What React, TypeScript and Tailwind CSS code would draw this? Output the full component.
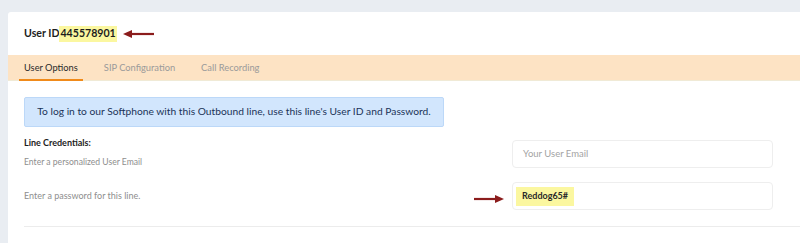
import React from "react";

function ArrowLeft() {
  return (
    <svg width="32" height="8" viewBox="0 0 32 8" className="block">
      <line x1="6" y1="4" x2="31" y2="4" stroke="#8b1c1c" strokeWidth="2.2" />
      <polygon points="0,4 9,0 9,8" fill="#8b1c1c" />
    </svg>
  );
}

function ArrowRight() {
  return (
    <svg width="30" height="8" viewBox="0 0 30 8" className="block">
      <line x1="0" y1="4" x2="24" y2="4" stroke="#8b1c1c" strokeWidth="2.2" />
      <polygon points="30,4 21,0 21,8" fill="#8b1c1c" />
    </svg>
  );
}

export default function App() {
  return (
    <div
      className="w-[800px] h-[243px] bg-[#e9edf2] pt-[12px] pl-[8px] overflow-hidden"
      style={{ fontFamily: "Lato, 'Open Sans', sans-serif" }}
    >
      <div className="bg-white rounded-tl-[3px] h-full">
        <div className="h-[43px] flex items-center pl-[16px] pt-[1px]">
          <span className="text-[10.6px] font-bold text-[#1d1d1d]">User ID</span>
          <span className="text-[10.6px] font-bold text-[#1d1d1d] bg-[#fbf7a0] px-[1px]">445578901</span>
          <span className="ml-[6px]">
            <ArrowLeft />
          </span>
        </div>
        <div className="h-[26px] bg-[#fde3c4] border-b border-[#f0ead6] flex items-stretch pl-[11px] text-[9.3px]">
          <div className="relative px-[5px] flex items-center text-[#2a2a2a]">
            User Options
            <div className="absolute left-0 right-0 bottom-[-1px] h-[2px] bg-[#f08a1a]" />
          </div>
          <div className="ml-[21px] flex items-center text-[#9a9a9a]">SIP Configuration</div>
          <div className="ml-[26px] flex items-center text-[#9a9a9a]">Call Recording</div>
        </div>
        <div className="pl-[16px] pt-[16px]">
          <div className="w-[420px] h-[30px] bg-[#d2e6fd] border border-[#bcd8f8] rounded-[2px] flex items-center justify-center text-[10.25px] text-[#1b3358]">
            To log in to our Softphone with this Outbound line, use this line's User ID and Password.
          </div>
          <div className="flex mt-[13px]">
            <div className="w-[488px] flex flex-col">
              <div className="text-[9px] font-bold text-[#1d1d1d] leading-[12px] mt-[-3px]">Line Credentials:</div>
              <div className="text-[8.6px] text-[#8e8e8e] leading-[12px] mt-[7px]">Enter a personalized User Email</div>
              <div className="text-[9px] text-[#8e8e8e] leading-[12px] mt-[22px]">Enter a password for this line.</div>
            </div>
            <div className="flex flex-col gap-[14px]">
              <div className="w-[261px] h-[28px] border border-[#eeeeee] rounded-[4px] flex items-center pl-[10px] text-[9.5px] text-[#a3a3a3]">
                Your User Email
              </div>
              <div className="relative w-[261px] h-[28px] border border-[#eeeeee] rounded-[4px] flex items-center pl-[3px]">
                <div className="absolute left-[-39px] top-[12px]">
                  <ArrowRight />
                </div>
                <span className="bg-[#fbf7a0] h-[19px] px-[6px] flex items-center text-[9px] font-bold text-[#2a2a2a]">
                  Reddog65#
                </span>
              </div>
            </div>
          </div>
          <div className="mt-[16px] h-[1px] bg-[#ececec]" />
        </div>
      </div>
    </div>
  );
}
